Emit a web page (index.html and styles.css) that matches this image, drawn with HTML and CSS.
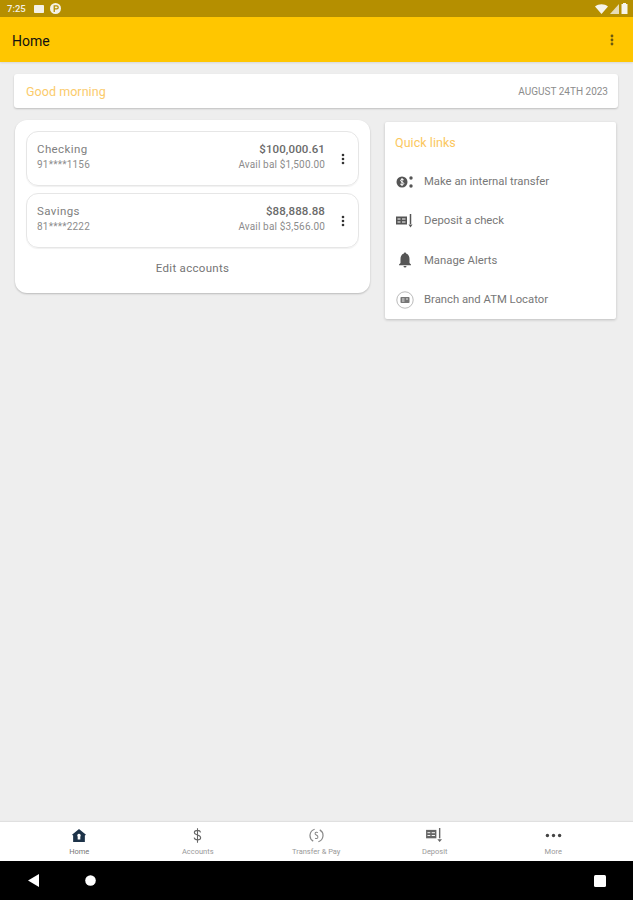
FILE: index.html
```html
<!DOCTYPE html>
<html lang="en">
<head>
    <meta charset="UTF-8">
    <meta name="viewport" content="width=device-width, initial-scale=1.0">
    <title>Home</title>
    <link rel="stylesheet" href="styles.css">
</head>
<body>
    <div class="status-bar">
        <div class="status-left">
            <span class="status-time">7:25</span>
            <svg width="10" height="8" viewBox="0 0 10 8"><rect width="10" height="8" rx="0.800" fill="#f4f1e6"/></svg>
            <svg width="11" height="11" viewBox="0 0 13 13"><circle cx="6.500" cy="6.500" r="6.500" fill="#f4f1e6"/><path d="M5 10.500V3.500h3a1.600 1.600 0 0 1 0 3.400H5" fill="none" stroke="#b58f00" stroke-width="1.500"/></svg>
        </div>
        <div class="status-right">
            <svg width="13" height="10" viewBox="0 0 13 10"><path d="M0 2.600C3.600-.6 9.400-.6 13 2.600L6.500 10z" fill="#f6f4ea"/></svg>
            <svg width="9" height="10" viewBox="0 0 9 10"><path d="M9 0v10H0z" fill="#e6dcb8"/></svg>
            <svg width="7" height="11" viewBox="0 0 7 11"><path d="M2 0h3v1h1.500v10H.5V1H2z" fill="#f6f4ea"/></svg>
        </div>
    </div>

    <header class="app-bar">
        <span class="app-title">Home</span>
        <svg class="app-menu" width="4" height="12" viewBox="0 0 4 12"><circle cx="2" cy="2" r="1.400"/><circle cx="2" cy="6" r="1.400"/><circle cx="2" cy="10" r="1.400"/></svg>
    </header>

    <main class="content">
        <section class="greeting">
            <span class="greeting-text">Good morning</span>
            <span class="greeting-date">AUGUST 24TH 2023</span>
        </section>

        <div class="columns">
            <section class="accounts">
                <div class="account">
                    <div class="account-info">
                        <div class="account-name">Checking</div>
                        <div class="account-number">91****1156</div>
                    </div>
                    <div class="account-balance">
                        <div class="balance-main">$100,000.61</div>
                        <div class="balance-avail">Avail bal $1,500.00</div>
                    </div>
                    <svg class="account-menu" width="4" height="12" viewBox="0 0 4 12"><circle cx="2" cy="2" r="1.300"/><circle cx="2" cy="6" r="1.300"/><circle cx="2" cy="10" r="1.300"/></svg>
                </div>
                <div class="account">
                    <div class="account-info">
                        <div class="account-name">Savings</div>
                        <div class="account-number">81****2222</div>
                    </div>
                    <div class="account-balance">
                        <div class="balance-main">$88,888.88</div>
                        <div class="balance-avail">Avail bal $3,566.00</div>
                    </div>
                    <svg class="account-menu" width="4" height="12" viewBox="0 0 4 12"><circle cx="2" cy="2" r="1.300"/><circle cx="2" cy="6" r="1.300"/><circle cx="2" cy="10" r="1.300"/></svg>
                </div>
                <div class="edit-accounts">Edit accounts</div>
            </section>

            <section class="quick-links">
                <h2 class="quick-title">Quick links</h2>
                <div class="quick-row">
                    <svg class="quick-icon" width="18" height="14" viewBox="0 0 18 14"><circle cx="6" cy="7" r="5.500" fill="#555"/><path d="M7.800 5C7.200 4 4.500 4 4.500 5.500S7.800 7 7.800 8.500 5 10 4.200 9M6 3v8" fill="none" stroke="#fff" stroke-width="1"/><circle cx="15" cy="3" r="1.700" fill="#555"/><circle cx="15" cy="11" r="1.700" fill="#555"/></svg>
                    <span>Make an internal transfer</span>
                </div>
                <div class="quick-row">
                    <svg class="quick-icon" width="18" height="14" viewBox="0 0 18 14"><rect x="0" y="2.500" width="11" height="8" fill="#555"/><path d="M1.500 5h3M1.500 8h3M6 5h3.500M6 8h3.500" stroke="#fff" stroke-width="1"/><path d="M14.500 0v10" stroke="#555" stroke-width="1.500"/><path d="M12.500 10.500h4l-2 3z" fill="#555"/></svg>
                    <span>Deposit a check</span>
                </div>
                <div class="quick-row">
                    <svg class="quick-icon" width="18" height="16" viewBox="0 0 18 16"><path d="M9 0.500c.8 0 1.300.6 1.300 1.300C12.600 2.500 13.500 4.500 13.500 7v4l1.500 1.500v.7H3v-.7L4.500 11V7c0-2.500.9-4.500 3.200-5.200C7.700 1.100 8.200.5 9 .5zM7.500 14h3a1.500 1.500 0 0 1-3 0z" fill="#555"/></svg>
                    <span>Manage Alerts</span>
                </div>
                <div class="quick-row">
                    <svg class="quick-icon" width="18" height="18" viewBox="0 0 18 18"><circle cx="9" cy="9" r="8.200" fill="#fff" stroke="#bbb" stroke-width="1"/><rect x="4.500" y="6" width="9" height="6" rx="0.800" fill="#777"/><path d="M6 8h2.500M6 10h2.500M10 8h2" stroke="#fff" stroke-width="0.800"/></svg>
                    <span>Branch and ATM Locator</span>
                </div>
            </section>
        </div>
    </main>

    <nav class="bottom-nav">
        <div class="nav-item nav-active">
            <svg width="14" height="15" viewBox="0 0 16 15"><path d="M8 0l8 6.500-1.300 1V15H1.300V7.500L0 6.500z" fill="#1d3349"/><path d="M8 5.500a2 2 0 0 1 1.500 3.300V12h-3V8.800A2 2 0 0 1 8 5.500z" fill="#fff"/></svg>
            <span>Home</span>
        </div>
        <div class="nav-item">
            <svg width="9" height="15" viewBox="0 0 10 16"><path d="M8.500 4.500C8 2.800 6.700 2.300 5 2.300 3 2.300 1.500 3.200 1.500 4.800c0 3.500 7 1.800 7 5.600 0 1.700-1.600 2.500-3.500 2.500-1.900 0-3.300-.8-3.700-2.500M5 0v16" fill="none" stroke="#666" stroke-width="1.200"/></svg>
            <span>Accounts</span>
        </div>
        <div class="nav-item">
            <svg width="15" height="15" viewBox="0 0 16 16"><path d="M6 1.300A7 7 0 0 0 4.500 14M10 14.700A7 7 0 0 0 11.500 2" fill="none" stroke="#888" stroke-width="1.300"/><path d="M9.500 5C8.500 4.300 6.500 4.400 6.500 6S9.500 7.500 9.500 9.500 7.500 11.500 6.500 11" fill="none" stroke="#888" stroke-width="1.100"/></svg>
            <span>Transfer &amp; Pay</span>
        </div>
        <div class="nav-item">
            <svg width="17" height="15" viewBox="0 0 18 16"><rect x="0" y="2" width="11" height="9" fill="#666"/><path d="M1.500 5h3M1.500 8h3M6 5h3.500M6 8h3.500" stroke="#fff" stroke-width="1"/><path d="M14.500 0v11" stroke="#666" stroke-width="1.500"/><path d="M12 12h5l-2.500 3z" fill="#666"/></svg>
            <span>Deposit</span>
        </div>
        <div class="nav-item">
            <svg width="17" height="15" viewBox="0 0 17 16"><circle cx="2" cy="8" r="1.800" fill="#444"/><circle cx="8.500" cy="8" r="1.800" fill="#444"/><circle cx="15" cy="8" r="1.800" fill="#444"/></svg>
            <span>More</span>
        </div>
    </nav>

    <div class="system-nav">
        <svg width="11" height="13" viewBox="0 0 11 13"><path d="M11 0v13L0 6.500z" fill="#fff"/></svg>
        <svg width="11" height="11" viewBox="0 0 11 11"><circle cx="5.500" cy="5.500" r="5.300" fill="#fff"/></svg>
        <svg width="12" height="12" viewBox="0 0 12 12"><rect width="12" height="12" rx="1.500" fill="#fff"/></svg>
    </div>
</body>
</html>
```

FILE: styles.css
```css
* {
    box-sizing: border-box;
}
body {
    font-family: Roboto, "Liberation Sans", sans-serif;
    margin: 0;
    height: 900px;
    display: flex;
    flex-direction: column;
    background-color: #eeeeee;
    color: #757575;
    overflow: hidden;
}

/* top bars */
.status-bar {
    height: 17px;
    flex: none;
    padding: 0 5px 0 7px;
    display: flex;
    justify-content: space-between;
    align-items: center;
    background-color: #b58f00;
}
.status-left, .status-right {
    display: flex;
    align-items: center;
}
.status-left {
    gap: 6px;
}
.status-right {
    gap: 2px;
}
.status-time {
    font-size: 9.500px;
    font-weight: 500;
    color: #f4f1e6;
    width: 21px;
}
.app-bar {
    height: 45px;
    flex: none;
    padding: 0 19px 0 12px;
    display: flex;
    justify-content: space-between;
    align-items: center;
    background-color: #ffc600;
    box-shadow: 0 1px 2px rgba(0, 0, 0, 0.1);
}
.app-title {
    font-size: 14px;
    color: #111;
    position: relative;
    top: 1px;
}
.app-menu {
    fill: #6b5a10;
}

/* main area */
.content {
    flex: 1;
    padding: 12px 15px 0 14px;
}
.greeting {
    height: 34px;
    padding: 0 10px 0 12px;
    display: flex;
    justify-content: space-between;
    align-items: center;
    background: white;
    border-radius: 3px;
    box-shadow: 0 1px 2px rgba(0, 0, 0, 0.2);
}
.greeting-text {
    font-size: 12.500px;
    color: #fbcb6b;
    letter-spacing: 0.05px;
}
.greeting-date {
    font-size: 10px;
    color: #8c8c8c;
}
.columns {
    display: flex;
    align-items: flex-start;
    margin-top: 12px;
}

.accounts {
    width: 355px;
    margin-left: 1px;
    height: 173px;
    padding: 11px 11px 0;
    background: white;
    border-radius: 12px;
    box-shadow: 0 1px 2px rgba(0, 0, 0, 0.22);
}
.account {
    height: 55px;
    margin-bottom: 7px;
    padding: 0 13px 0 10px;
    display: flex;
    align-items: center;
    border: 1px solid #e6e6e6;
    border-radius: 12px;
    box-shadow: 0 1px 1px rgba(0, 0, 0, 0.06);
}
.account-info {
    flex: 1;
    margin-bottom: 6px;
}
.account-name {
    font-size: 11.500px;
    color: #808080;
    letter-spacing: 0.4px;
    margin-bottom: 3px;
}
.account-number {
    font-size: 10px;
    color: #8c8c8c;
    letter-spacing: 0.2px;
}
.account-balance {
    text-align: right;
    margin-right: 16px;
    margin-bottom: 6px;
}
.balance-main {
    font-size: 11.500px;
    font-weight: 500;
    color: #6a6a6a;
    letter-spacing: 0.1px;
    margin-bottom: 3px;
}
.balance-avail {
    font-size: 10px;
    color: #8c8c8c;
    letter-spacing: 0.15px;
}
.account-menu {
    fill: #333;
}
.edit-accounts {
    margin-top: 13px;
    text-align: center;
    font-size: 11.500px;
    color: #757575;
    letter-spacing: 0.3px;
}

.quick-links {
    width: 231px;
    height: 197px;
    margin-left: 15px;
    margin-top: 2px;
    padding: 0 11px;
    background: white;
    border-radius: 2px;
    box-shadow: 0 1px 3px rgba(0, 0, 0, 0.2);
}
.quick-title {
    height: 40px;
    margin: 0 0 0 -1px;
    padding-top: 13px;
    font-size: 12.500px;
    font-weight: 400;
    color: #fbc75e;
    letter-spacing: 0.05px;
}
.quick-row {
    height: 39.300px;
    display: flex;
    align-items: center;
    gap: 10px;
    font-size: 11.300px;
    color: #777;
}
.quick-icon {
    flex: none;
}

/* bottom */
.bottom-nav {
    height: 39px;
    flex: none;
    display: grid;
    grid-template-columns: repeat(5, 118.500px);
    padding-left: 20px;
    background: white;
    box-shadow: 0 -1px 1px rgba(0, 0, 0, 0.06);
}
.nav-item {
    display: flex;
    flex-direction: column;
    align-items: center;
    padding-top: 6px;
    font-size: 7.500px;
    color: #999;
}
.nav-item svg {
    margin-bottom: 4px;
}
.nav-active {
    color: #777;
}
.system-nav {
    height: 39px;
    flex: none;
    display: flex;
    align-items: center;
    gap: 46px;
    padding-left: 28px;
    background: black;
}
.system-nav svg:last-child {
    margin-left: auto;
    margin-right: 27px;
}
```
